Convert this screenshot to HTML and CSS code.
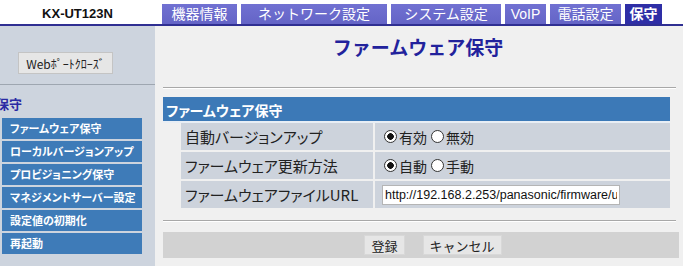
FILE: index.html
```html
<!DOCTYPE html>
<html lang="ja">
<head>
    <meta charset="UTF-8">
    <meta name="viewport" content="width=device-width, initial-scale=1.0">
    <title>ファームウェア保守</title>
    <link rel="stylesheet" href="styles.css">
</head>
<body>
    <header class="top-bar">
        <div class="model">KX-UT123N</div>
        <nav class="tabs">
            <a class="tab tab-info">機器情報</a>
            <a class="tab tab-network">ネットワーク設定</a>
            <a class="tab tab-system">システム設定</a>
            <a class="tab tab-voip">VoIP</a>
            <a class="tab tab-phone">電話設定</a>
            <a class="tab tab-maint active">保守</a>
        </nav>
    </header>

    <div class="layout">
        <aside class="sidebar">
            <div class="sidebar-top">
                <button class="close-btn" type="button">Webﾎﾟｰﾄｸﾛｰｽﾞ</button>
            </div>
            <div class="menu-title">保守</div>
            <ul class="menu">
                <li>ファームウェア保守</li>
                <li>ローカルバージョンアップ</li>
                <li>プロビジョニング保守</li>
                <li>マネジメントサーバー設定</li>
                <li>設定値の初期化</li>
                <li>再起動</li>
            </ul>
        </aside>

        <main class="content">
            <h1 class="page-title">ファームウェア保守</h1>
            <hr class="divider">

            <section class="panel">
                <div class="panel-head">ファームウェア保守</div>
                <div class="form-grid">
                    <div class="cell label">自動バージョンアップ</div>
                    <div class="cell value">
                        <label class="opt"><input class="radio" type="radio" name="auto" checked>有効</label>
                        <label class="opt"><input class="radio" type="radio" name="auto">無効</label>
                    </div>

                    <div class="cell label">ファームウェア更新方法</div>
                    <div class="cell value">
                        <label class="opt"><input class="radio" type="radio" name="method" checked>自動</label>
                        <label class="opt"><input class="radio" type="radio" name="method">手動</label>
                    </div>

                    <div class="cell label">ファームウェアファイルURL</div>
                    <div class="cell value">
                        <input class="url-input" type="text" value="http://192.168.2.253/panasonic/firmware/update.fw">
                    </div>
                </div>
            </section>

            <hr class="divider divider-bottom">

            <div class="actions">
                <button class="action-btn" type="button">登録</button>
                <button class="action-btn" type="button">キャンセル</button>
            </div>
        </main>
    </div>
</body>
</html>
```

FILE: styles.css
```css
* {
    margin: 0;
    padding: 0;
    box-sizing: border-box;
}

body {
    font-family: "Liberation Sans", "Noto Sans CJK JP", sans-serif;
    background: #f0f0f0;
    color: #222;
    width: 683px;
    height: 266px;
    overflow: hidden;
}

/* header */
.top-bar {
    display: flex;
    align-items: flex-end;
    height: 26px;
    background: #fff;
    border-bottom: 2px solid #2f2f92;
}

.model {
    width: 155px;
    align-self: center;
    text-align: center;
    font-weight: bold;
    font-size: 13px;
    color: #111;
    padding-top: 2px;
}

.tabs {
    display: flex;
    gap: 4px;
    margin-left: 7px;
}

.tab {
    display: block;
    height: 20px;
    line-height: 20px;
    text-align: center;
    font-size: 14px;
    color: #fff;
    background: linear-gradient(#7171d2, #6464c6);
}

.tab-info { width: 75px; }
.tab-network { width: 146px; }
.tab-system { width: 110px; }
.tab-voip { width: 41px; }
.tab-phone { width: 71px; }
.tab-maint { width: 37px; }

.tab.active {
    background: #2e2ea6;
    font-weight: bold;
}

/* layout */
.layout {
    display: flex;
    height: 240px;
}

.sidebar {
    width: 155px;
    background: #cdd4de;
}

.sidebar-top {
    padding: 26px 0 10px 18px;
    border-bottom: 1px solid #9ea6b0;
}

.close-btn {
    width: 95px;
    height: 22px;
    font-family: "Noto Sans CJK JP", sans-serif;
    font-size: 12px;
    color: #222;
    background: #e6e6e6;
    border: 1px solid #c4c4c4;
}

.menu-title {
    margin: 9px 0 0 -4px;
    height: 24px;
    font-size: 13px;
    font-weight: bold;
    color: #2a2aa4;
    font-family: "Noto Sans CJK JP", sans-serif;
}

.menu {
    list-style: none;
    margin-left: 2px;
    width: 140px;
    display: flex;
    flex-direction: column;
    gap: 2px;
}

.menu li {
    height: 21px;
    line-height: 21px;
    padding-left: 8px;
    background: #3e7bb8;
    color: #fff;
    font-family: "Noto Sans CJK JP", sans-serif;
    font-size: 11px;
    font-weight: bold;
    font-feature-settings: "palt";
}

/* main */
.content {
    flex: 1;
    padding: 0 10px 0 8px;
}

.page-title {
    text-align: center;
    font-family: "Noto Sans CJK JP", sans-serif;
    font-size: 19px;
    font-weight: bold;
    color: #22229c;
    margin-top: 9px;
    height: 52px;
    line-height: 24px;
}

.divider {
    border: none;
    border-top: 1px solid #a8a8a8;
    border-bottom: 1px solid #fff;
    margin-right: -3px;
}

.panel {
    margin-top: 8px;
    margin-right: 3px;
}

.panel-head {
    height: 26px;
    line-height: 26px;
    padding-left: 3px;
    background: #3c79b7;
    color: #fff;
    font-family: "Noto Sans CJK JP", sans-serif;
    font-size: 14px;
    font-weight: bold;
    font-feature-settings: "palt";
    border-bottom: 2px solid #e8eef5;
}

.form-grid {
    display: grid;
    grid-template-columns: 192px 1fr;
    gap: 2px 2px;
    margin-left: 18px;
}

.cell {
    height: 27px;
    display: flex;
    align-items: center;
    background: #cdd3dc;
}

.label {
    padding-left: 4px;
    font-family: "Noto Sans CJK JP", sans-serif;
    font-size: 15px;
    font-feature-settings: "palt";
}

.value {
    padding-left: 9px;
    font-family: "Noto Sans CJK JP", sans-serif;
    font-size: 14px;
}

.opt {
    display: flex;
    align-items: center;
    margin-right: 4px;
}

.radio {
    appearance: none;
    width: 13px;
    height: 13px;
    margin-right: 2px;
    border: 1px solid #333;
    border-radius: 50%;
    background: #fff;
}

.radio:checked {
    background: radial-gradient(circle, #111 0 3px, #fff 3.6px);
}

.url-input {
    margin-left: -2px;
    width: 238px;
    height: 20px;
    padding: 0 2px;
    font-family: "Liberation Sans", sans-serif;
    font-size: 12.5px;
    color: #111;
    background: #fff;
    border: 1px solid #b5b5b5;
}

.divider-bottom {
    margin-top: 12px;
}

.actions {
    margin-top: 10px;
    margin-right: -6px;
    padding-left: 24px;
    height: 26px;
    background: #d2d2d2;
    display: flex;
    justify-content: center;
    align-items: center;
    gap: 18px;
}

.action-btn {
    height: 20px;
    padding: 0 6px;
    font-family: "Noto Sans CJK JP", sans-serif;
    font-size: 13px;
    color: #222;
    background: #e6e6e6;
    border: 1px solid #d8d8d8;
}
```
